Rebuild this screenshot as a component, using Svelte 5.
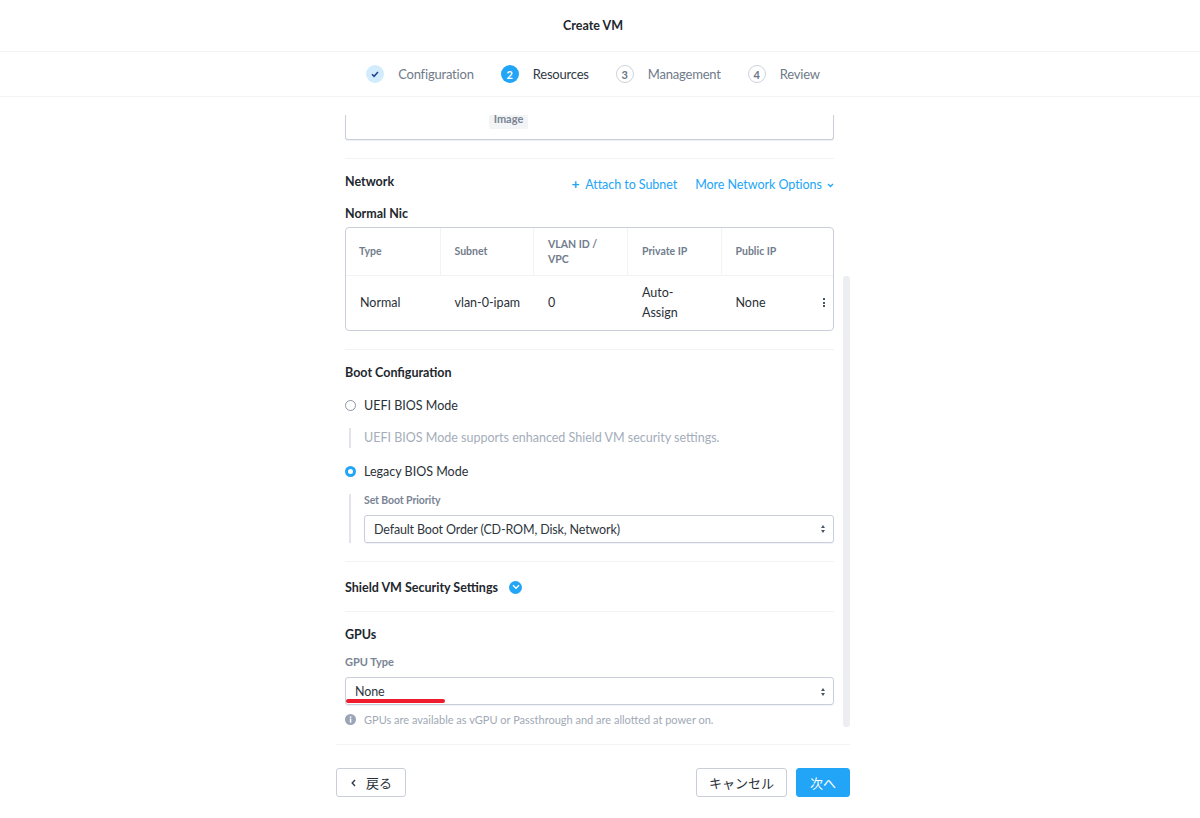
<script>
  const steps = [
    { n: '2', label: 'Resources', state: 'active' },
    { n: '3', label: 'Management', state: 'todo' },
    { n: '4', label: 'Review', state: 'todo' }
  ];
  const columns = ['Type', 'Subnet', 'VLAN ID / VPC', 'Private IP', 'Public IP'];
  const cells = ['Normal', 'vlan-0-ipam', '0', 'Auto-Assign', 'None'];
</script>

<div class="page">
  <header class="title">Create VM</header>

  <nav class="steps">
    <div class="step">
      <span class="dot done">
        <svg width="10" height="10" viewBox="0 0 10 10"><path d="M2 5.2l2.1 2.1L8 3" fill="none" stroke="#22408f" stroke-width="1.5" /></svg>
      </span>
      <span class="step-label">Configuration</span>
    </div>
    {#each steps as s}
      <div class="step">
        <span class="dot {s.state}">{s.n}</span>
        <span class="step-label {s.state}">{s.label}</span>
      </div>
    {/each}
  </nav>

  <main class="body">
    <div class="scrollbar"></div>
    <div class="content">
      <div class="image-card"><span class="tag">Image</span></div>
      <hr class="first" />

      <div class="section-head">
        <h3>Network</h3>
        <div class="links">
          <a href="#attach"><b>+</b> Attach to Subnet</a>
          <a href="#more">More Network Options
            <svg width="7" height="5" viewBox="0 0 7 5"><path d="M1 1l2.5 2.5L6 1" fill="none" stroke="#22a5f7" stroke-width="1.3" /></svg>
          </a>
        </div>
      </div>

      <h3 class="nic-title">Normal Nic</h3>
      <div class="table">
        <div class="row head">
          {#each columns as c}<div class="cell">{c}</div>{/each}
        </div>
        <div class="row data">
          {#each cells as c}<div class="cell">{c}</div>{/each}
          <span class="kebab"><i></i><i></i><i></i></span>
        </div>
      </div>
      <hr class="after-table" />

      <h3 class="boot-title">Boot Configuration</h3>
      <label class="radio"><span class="circle"></span>UEFI BIOS Mode</label>
      <div class="indent help">UEFI BIOS Mode supports enhanced Shield VM security settings.</div>
      <label class="radio legacy"><span class="circle on"></span>Legacy BIOS Mode</label>
      <div class="indent boot-field">
        <div class="field-label">Set Boot Priority</div>
        <div class="select">
          Default Boot Order (CD-ROM, Disk, Network)
          <span class="updown"><i class="up"></i><i class="down"></i></span>
        </div>
      </div>
      <hr class="after-boot" />

      <div class="shield">
        <h3>Shield VM Security Settings</h3>
        <span class="expand">
          <svg width="8" height="6" viewBox="0 0 8 6"><path d="M1 1.2l3 3 3-3" fill="none" stroke="#fff" stroke-width="1.5" /></svg>
        </span>
      </div>
      <hr class="after-shield" />

      <h3 class="gpu-title">GPUs</h3>
      <div class="field-label gpu-label">GPU Type</div>
      <div class="select gpu">
        None
        <span class="updown"><i class="up"></i><i class="down"></i></span>
        <span class="redline"></span>
      </div>
      <div class="note">
        <svg width="11" height="11" viewBox="0 0 11 11"><circle cx="5.5" cy="5.5" r="5.5" fill="#9aa5b8" /><rect x="4.8" y="4.6" width="1.5" height="4" fill="#fff" /><rect x="4.8" y="2.4" width="1.5" height="1.5" fill="#fff" /></svg>
        GPUs are available as vGPU or Passthrough and are allotted at power on.
      </div>
    </div>
  </main>

  <footer class="footer">
    <button class="btn back">
      <svg width="5" height="8" viewBox="0 0 5 8"><path d="M4 1L1.2 4 4 7" fill="none" stroke="#2f3a4a" stroke-width="1.4" /></svg>
      戻る
    </button>
    <div class="right">
      <button class="btn">キャンセル</button>
      <button class="btn primary">次へ</button>
    </div>
  </footer>
</div>

<style>
  :global(body) {
    margin: 0;
    background: #fff;
    font-family: Lato, "Noto Sans CJK JP", sans-serif;
    color: #22272e;
  }

  .page {
    width: 1200px;
    height: 818px;
    display: flex;
    flex-direction: column;
    overflow: hidden;
  }

  .title {
    height: 52px;
    flex: none;
    display: flex;
    align-items: center;
    justify-content: center;
    padding: 0 14px 1px 0;
    box-sizing: border-box;
    font-size: 12.5px;
    font-weight: 700;
    border-bottom: 1px solid #f1f3f5;
  }

  .steps {
    height: 45px;
    flex: none;
    box-sizing: border-box;
    display: flex;
    align-items: center;
    justify-content: center;
    gap: 27px;
    padding-right: 14px;
    border-bottom: 1px solid #f1f3f5;
  }

  .step {
    display: flex;
    align-items: center;
    gap: 14px;
  }

  .dot {
    width: 18px;
    height: 18px;
    border-radius: 50%;
    box-sizing: border-box;
    display: flex;
    align-items: center;
    justify-content: center;
    font-size: 11px;
    font-weight: 700;
  }

  .dot.done { background: #d3ecfd; }
  .dot.active { background: #22a5f7; color: #fff; }
  .dot.todo { border: 1px solid #cdd3dc; color: #6b7686; }

  .step-label {
    font-size: 13px;
    color: #6f7a89;
    letter-spacing: -0.2px;
  }

  .step-label.active { color: #2f3a46; }

  .body {
    height: 648px;
    flex: none;
    width: 514px;
    margin-left: 336px;
    position: relative;
    padding-top: 18px;
    box-sizing: border-box;
    border-bottom: 1px solid #f1f3f5;
  }

  .scrollbar {
    position: absolute;
    right: 0;
    top: 179px;
    width: 7px;
    height: 451px;
    background: #eceef2;
    border-radius: 3px;
  }

  .content {
    width: 489px;
    margin-left: 9px;
  }

  .image-card {
    height: 25px;
    box-sizing: border-box;
    border: 1px solid #c9ced8;
    border-top: none;
    border-radius: 0 0 3px 3px;
    padding-left: 143px;
    box-shadow: 0 1px 1px #eef0f3;
  }

  .tag {
    display: block;
    width: 39px;
    height: 14px;
    line-height: 7px;
    text-align: center;
    font-size: 11px;
    font-weight: 700;
    color: #7a8494;
    background: #f3f4f6;
    border-radius: 2px;
  }

  hr {
    border: none;
    border-top: 1px solid #f2f3f5;
    margin: 0;
  }

  hr.first { margin-top: 18px; }

  h3 {
    margin: 0;
    font-size: 12.5px;
    font-weight: 700;
    color: #22272e;
  }

  .section-head {
    display: flex;
    justify-content: space-between;
    align-items: flex-start;
    margin-top: 15px;
    height: 32px;
  }

  .links {
    display: flex;
    align-items: baseline;
    gap: 18px;
    font-size: 12.5px;
    letter-spacing: -0.05px;
    line-height: 16px;
    padding-top: 3px;
  }

  .links a {
    color: #22a5f7;
    text-decoration: none;
  }

  .links b { font-size: 14px; line-height: 14px; font-weight: 700; margin-right: 3px; }
  .links svg { margin-left: 2px; vertical-align: 1px; }

  .nic-title { line-height: 16px; }

  .table {
    margin-top: 5px;
    height: 104px;
    box-sizing: border-box;
    border: 1px solid #c9ced8;
    border-radius: 4px;
    position: relative;
  }

  .row {
    display: grid;
    grid-template-columns: 94.5px 93.5px 94px 93.5px 1fr;
  }

  .head {
    height: 48px;
    box-sizing: border-box;
    border-bottom: 1px solid #f2f3f5;
    font-size: 10.5px;
    font-weight: 700;
    color: #717c8c;
    line-height: 15px;
  }

  .head .cell {
    display: flex;
    align-items: center;
    padding: 0 14px;
    border-right: 1px solid #f2f3f5;
  }

  .head .cell:first-child { padding-left: 13px; }
  .head .cell:last-child { border-right: none; }

  .data {
    height: 54px;
    font-size: 12.5px;
    line-height: 20px;
    color: #2a3038;
  }

  .data .cell {
    display: flex;
    align-items: center;
    padding: 0 14px;
  }

  .data .cell:nth-child(2) { white-space: nowrap; }

  .kebab {
    position: absolute;
    right: 8px;
    bottom: 23px;
    display: flex;
    flex-direction: column;
    gap: 1.5px;
  }

  .kebab i {
    width: 2px;
    height: 2px;
    background: #4a5564;
    display: block;
  }

  hr.after-table { margin-top: 18px; }

  .boot-title { margin-top: 15px; line-height: 16px; }

  .radio {
    display: flex;
    align-items: center;
    gap: 8px;
    margin-top: 16px;
    height: 17px;
    font-size: 12.5px;
    color: #2a3038;
  }

  .circle {
    width: 11px;
    height: 11px;
    box-sizing: border-box;
    border: 1.3px solid #8d97a6;
    border-radius: 50%;
  }

  .circle.on { border: 3.5px solid #22a5f7; }

  .indent {
    border-left: 2px solid #e1e4e9;
    padding-left: 13px;
  }

  .help {
    margin: 14px 0 0 4px;
    height: 20px;
    line-height: 20px;
    font-size: 12.5px;
    color: #a4adba;
  }

  .radio.legacy { margin-top: 15px; }

  .boot-field {
    margin: 14px 0 0 4px;
    height: 49px;
  }

  .field-label {
    font-size: 10.5px;
    font-weight: 700;
    letter-spacing: -0.1px;
    color: #7a8494;
    line-height: 13px;
  }

  .select {
    box-sizing: border-box;
    height: 28px;
    display: flex;
    align-items: center;
    justify-content: space-between;
    border: 1px solid #c9ced8;
    border-radius: 3px;
    padding: 0 8px 0 9px;
    font-size: 12.5px;
    letter-spacing: -0.14px;
    color: #2f3640;
    position: relative;
    box-shadow: 0 1px 1px #f0f1f4;
  }

  .boot-field .select { margin-top: 8px; }

  .updown {
    display: flex;
    flex-direction: column;
    gap: 2px;
  }

  .updown i {
    display: block;
    width: 0;
    height: 0;
    border-left: 2px solid transparent;
    border-right: 2px solid transparent;
  }

  .up { border-bottom: 3px solid #4a5564; }
  .down { border-top: 3px solid #4a5564; }

  hr.after-boot { margin-top: 18px; }

  .shield {
    display: flex;
    align-items: center;
    gap: 11px;
    margin-top: 17px;
    height: 16px;
  }

  .expand {
    width: 13px;
    height: 13px;
    border-radius: 50%;
    background: #22a5f7;
    display: flex;
    align-items: center;
    justify-content: center;
  }

  hr.after-shield { margin-top: 16px; }

  .gpu-title { margin-top: 15px; line-height: 16px; }
  .field-label.gpu-label { margin-top: 12px; font-size: 11px; letter-spacing: 0; }
  .select.gpu { margin-top: 9px; padding-top: 1px; }

  .redline {
    position: absolute;
    left: 0;
    top: 21px;
    width: 99px;
    height: 4px;
    background: #ee1c2e;
    border-radius: 2px;
  }

  .note {
    display: flex;
    align-items: center;
    gap: 8px;
    margin-top: 8px;
    font-size: 11px;
    color: #a0a9b6;
  }

  .footer {
    flex: 1;
    width: 514px;
    margin-left: 336px;
    display: flex;
    justify-content: space-between;
    padding-top: 23px;
    box-sizing: border-box;
  }

  .right { display: flex; gap: 9px; }

  .btn {
    height: 29px;
    box-sizing: border-box;
    padding: 0 12px;
    border: 1px solid #c9ced8;
    border-radius: 3px;
    background: #fff;
    font-family: Lato, "Noto Sans CJK JP", sans-serif;
    font-size: 13px;
    color: #2a3038;
    display: flex;
    align-items: center;
  }

  .back { width: 70px; padding-left: 14px; gap: 10px; }
  .primary { background: #22a5f7; border-color: #22a5f7; color: #fff; width: 54px; justify-content: center; padding: 0; }
</style>
